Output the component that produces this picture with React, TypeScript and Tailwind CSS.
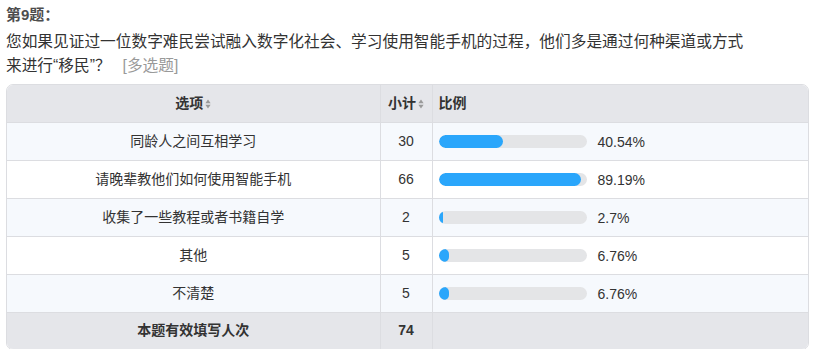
import React from 'react';

interface Row {
  label: string;
  count: number;
  percent: string;
  ratio: number;
}

const rows: Row[] = [
  { label: '同龄人之间互相学习', count: 30, percent: '40.54%', ratio: 40.54 },
  { label: '请晚辈教他们如何使用智能手机', count: 66, percent: '89.19%', ratio: 89.19 },
  { label: '收集了一些教程或者书籍自学', count: 2, percent: '2.7%', ratio: 2.7 },
  { label: '其他', count: 5, percent: '6.76%', ratio: 6.76 },
  { label: '不清楚', count: 5, percent: '6.76%', ratio: 6.76 },
];

// little up/down sort arrows next to the header labels
const SortIcon = () => (
  <svg width="6" height="10" viewBox="0 0 6 10" className="ml-[2px] inline-block">
    <path d="M3 0.5 L5.6 4.2 H0.4 Z" fill="#9a9a9a" />
    <path d="M3 9.5 L5.6 5.8 H0.4 Z" fill="#9a9a9a" />
  </svg>
);

const fontStack = { fontFamily: '"Liberation Sans", "Noto Sans CJK SC", sans-serif' };

export default function App() {
  return (
    <div className="bg-white w-[818px] h-[349px] overflow-hidden text-[#333]" style={fontStack}>
      <div className="pl-[6px] pt-[5px]">
        <div className="text-[15px] font-bold text-[#4d4d4d] leading-[20px]">第9题：</div>
        <div className="text-[15.7px] leading-[24px] mt-[5px]">
          <div>您如果见证过一位数字难民尝试融入数字化社会、学习使用智能手机的过程，他们多是通过何种渠道或方式</div>
          <div className="flex">
            <span>来进行“移民”？</span>
            <span className="ml-[12px] text-[#999]">[多选题]</span>
          </div>
        </div>
      </div>

      <div className="ml-[6px] mt-[6px] w-[803px] border border-[#dcdde1] rounded-[7px] overflow-hidden text-[14px]">
        <table className="w-full border-collapse">
          <thead>
            <tr className="bg-[#e5e6ea] h-[37px]">
              <th className="w-[373px] font-bold text-center border-r border-[#dcdde1]">
                选项<SortIcon />
              </th>
              <th className="w-[52px] font-bold text-center border-r border-[#dcdde1]">
                小计<SortIcon />
              </th>
              <th className="font-bold text-left pl-[6px]">比例</th>
            </tr>
          </thead>
          <tbody>
            {rows.map((row, i) => (
              <tr key={row.label} className={`h-[38px] border-t border-[#dcdde1] ${i % 2 === 0 ? 'bg-[#f6f9fd]' : 'bg-white'}`}>
                <td className="text-center border-r border-[#dcdde1]">{row.label}</td>
                <td className="text-center border-r border-[#dcdde1]">{row.count}</td>
                <td className="pl-[6px]">
                  <div className="flex items-center">
                    <div className="w-[148px] h-[13px] rounded-full bg-[#e4e5e7] overflow-hidden">
                      <div className="h-full rounded-full bg-[#2aa6fb]" style={{ width: `${Math.min(row.ratio * 1.6, 148)}px` }} />
                    </div>
                    <span className="ml-[11px] mt-[3px]">{row.percent}</span>
                  </div>
                </td>
              </tr>
            ))}
            <tr className="h-[37px] bg-[#e5e6ea] border-t border-[#dcdde1]">
              <td className="text-center font-bold border-r border-[#dcdde1]">本题有效填写人次</td>
              <td className="text-center font-bold border-r border-[#dcdde1]">74</td>
              <td></td>
            </tr>
          </tbody>
        </table>
      </div>
    </div>
  );
}
